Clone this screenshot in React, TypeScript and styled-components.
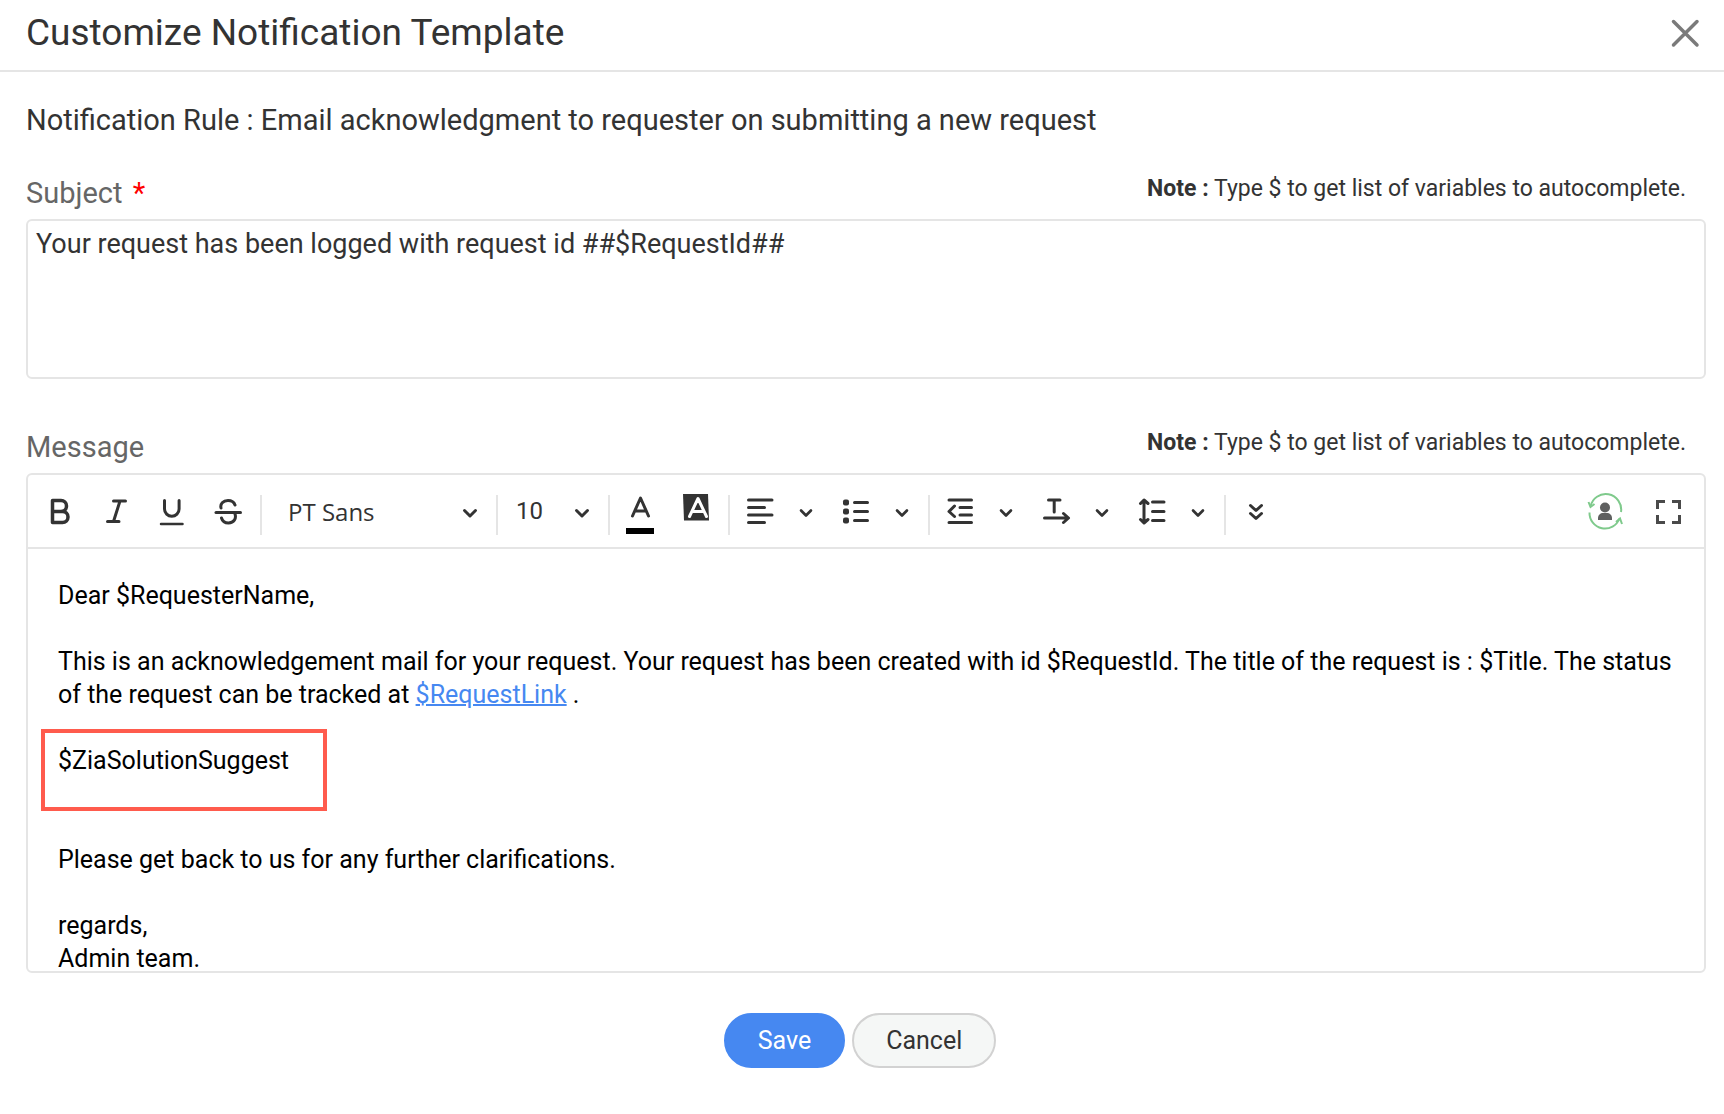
import React, { useState } from "react";
import styled, { createGlobalStyle, css } from "styled-components";

const uiFont = `Roboto, "Liberation Sans", sans-serif`;
const line = "#e5e5e5";
const ink = "#333333";

const GlobalStyle = createGlobalStyle`
  *, *::before, *::after { box-sizing: border-box; }
  body { margin: 0; background: #ffffff; color: ${ink}; font-family: ${uiFont}; }
  button, select, textarea { font: inherit; color: inherit; }
`;

const Dialog = styled.main`
  display: flex;
  flex-direction: column;
`;

const Header = styled.header`
  display: flex;
  align-items: center;
  justify-content: space-between;
  height: 72px;
  padding: 0 21px 4px 26px;
  border-bottom: 2px solid ${line};
`;

const Title = styled.h1`
  margin: 0;
  font-size: 37px;
  font-weight: 400;
  line-height: 44px;
`;

const IconButton = styled.button`
  display: flex;
  align-items: center;
  justify-content: center;
  width: 36px;
  height: 36px;
  padding: 0;
  border: 0;
  background: transparent;
  cursor: pointer;
`;

const Form = styled.form`
  display: flex;
  flex-direction: column;
  padding: 28px 18px 44px 26px;
`;

const Rule = styled.p`
  margin: 0 0 33px;
  font-size: 29px;
  line-height: 40px;
`;

const Field = styled.section`
  display: flex;
  flex-direction: column;
  margin-bottom: 48px;
`;

const FieldHead = styled.div`
  display: flex;
  align-items: flex-start;
  justify-content: space-between;
  padding-right: 20px;
  height: 46px;
`;

const labelText = css`
  font-size: 29px;
  line-height: 40px;
  color: #666666;
`;

const Label = styled.label`
  ${labelText}
`;

const LabelText = styled.span`
  ${labelText}
`;

const Required = styled.span`
  margin-left: 3px;
  color: #ff0000;
`;

const Note = styled.p`
  margin: 0;
  font-size: 23px;
  line-height: 32px;
`;

const SubjectBox = styled.textarea`
  width: 100%;
  height: 160px;
  padding: 6px 8px;
  border: 2px solid ${line};
  border-radius: 6px;
  font-size: 27px;
  line-height: 34px;
  resize: none;
  outline: none;
`;

const Editor = styled.div`
  display: flex;
  flex-direction: column;
  border: 2px solid ${line};
  border-radius: 6px;
  overflow: hidden;
`;

const Toolbar = styled.div`
  display: flex;
  align-items: center;
  justify-content: space-between;
  height: 74px;
  padding: 0 8px 0 4px;
  border-bottom: 2px solid ${line};
`;

const ToolGroup = styled.div<{ $gap?: number }>`
  display: flex;
  align-items: center;
  gap: ${(p) => p.$gap ?? 0}px;
`;

const Tool = styled.button`
  display: flex;
  align-items: center;
  justify-content: center;
  width: 56px;
  height: 48px;
  padding: 0;
  border: 0;
  background: transparent;
  cursor: pointer;
`;

const Caret = styled(Tool)`
  width: 36px;
  margin-right: 4px;
`;

const Divider = styled.span`
  width: 2px;
  height: 40px;
  margin: 8px 2px 0 4px;
  background: ${line};
`;

const SelectWrap = styled.span<{ $width: number }>`
  position: relative;
  width: ${(p) => p.$width}px;
  height: 48px;

  svg {
    position: absolute;
    top: 4px;
    right: 2px;
    pointer-events: none;
  }
`;

const Select = styled.select<{ $wide?: boolean }>`
  width: 100%;
  height: 48px;
  padding: 0 44px 0 ${(p) => (p.$wide ? 24 : 16)}px;
  border: 0;
  appearance: none;
  background: transparent;
  font-family: ${(p) => (p.$wide ? `"Open Sans", sans-serif` : uiFont)};
  font-size: 24px;
  cursor: pointer;
`;

const Body = styled.div`
  height: 422px;
  padding: 30px 30px 0 30px;
  overflow: hidden;
  color: #000000;
  font-size: 25px;
  line-height: 33px;
  outline: none;
`;

const Para = styled.p<{ $after?: number }>`
  position: relative;
  margin: 0 0 ${(p) => p.$after ?? 33}px;
`;

const MailLink = styled.a`
  color: #4688f1;
  text-decoration-thickness: 2px;
`;

const Highlight = styled.span`
  position: absolute;
  top: -15px;
  left: -17px;
  width: 286px;
  height: 82px;
  border: 4px solid #ff5b4d;
  pointer-events: none;
`;

const Actions = styled.div`
  display: flex;
  justify-content: center;
  gap: 7px;
  margin-top: -8px;
  padding-right: 12px;
`;

const Action = styled.button<{ $primary?: boolean }>`
  height: 55px;
  padding: 0 32px;
  border: 2px solid ${(p) => (p.$primary ? "#4688f1" : "#d2d2d2")};
  border-radius: 28px;
  background: ${(p) => (p.$primary ? "#4688f1" : "#f5f7f6")};
  color: ${(p) => (p.$primary ? "#ffffff" : ink)};
  font-size: 25px;
  cursor: pointer;
`;

const Glyph = ({ children, w = 3 }: { children: React.ReactNode; w?: number }) => (
  <svg width="40" height="48" viewBox="0 0 40 48" fill="none" stroke={ink} strokeWidth={w} strokeLinecap="round" strokeLinejoin="round" aria-hidden="true">
    {children}
  </svg>
);

const Chevron = () => (
  <svg width="40" height="40" viewBox="0 0 40 40" fill="none" stroke={ink} strokeWidth="3" strokeLinecap="round" strokeLinejoin="round" aria-hidden="true">
    <path d="M14.5 19.5 20 25l5.500-5.500" />
  </svg>
);

const BoldIcon = () => (
  <Glyph>
    <path d="M12.500 13.500h8.500a5.300 5.300 0 0 1 0 11h-8.500zM12.500 24.500h10a5.500 5.500 0 0 1 0 11h-10z" strokeWidth="3.500" />
  </Glyph>
);
const ItalicIcon = () => (
  <Glyph>
    <path d="M17.500 14h12M11.500 34.500h11.500M24 14l-6.500 20.500" />
  </Glyph>
);
const UnderlineIcon = () => (
  <Glyph>
    <path d="M12.500 13.500v8.500a7.300 7.300 0 0 0 14.600 0v-8.500" />
    <path d="M9 37h21.500" strokeWidth="2.500" />
  </Glyph>
);
const StrikeIcon = () => (
  <Glyph>
    <path d="M8 25.500h24.500" />
    <path d="M27 18c-1-3-3.500-4.500-7-4.500-5 0-8 3.500-7 7.500M13.500 31c1 3.500 3.500 5 7 5 5.500 0 8-4.500 6.500-9" />
  </Glyph>
);
const TextColorIcon = () => (
  <Glyph>
    <path d="m12.500 29 8-18 8 18M15 24h11" />
    <path d="M6 44h28" stroke="#000000" strokeWidth="6" strokeLinecap="butt" />
  </Glyph>
);
const FillColorIcon = () => (
  <Glyph>
    <path d="M7 7h25l1 26.500H8z" fill={ink} stroke="none" />
    <path d="m13.500 29.500 8.500-18 8.500 18M17 24.500h10.500" stroke="#ffffff" />
  </Glyph>
);
const AlignIcon = () => (
  <Glyph>
    <path d="M8.500 13h23.500M8.500 20.500h16M8.500 28h23.500M8.500 35.500h16" />
  </Glyph>
);
const ListIcon = () => (
  <Glyph>
    <path d="M18.500 15.500H31.500M18.500 24.500H31.500M18.500 33.500H31.500" />
    <g fill={ink} stroke="none">
      <rect x="7" y="12.500" width="6" height="6" rx="2" />
      <rect x="7" y="21.500" width="6" height="6" rx="2" />
      <rect x="7" y="30.500" width="6" height="6" rx="2" />
    </g>
  </Glyph>
);
const OutdentIcon = () => (
  <Glyph>
    <path d="M9 13h22.500M20 20.500h11.500M20 28h11.500M9 35.500h22.500M14.500 19l-5.500 5.500 5.500 5" />
  </Glyph>
);
const DirectionIcon = () => (
  <Glyph>
    <path d="M12.500 13H24M18.200 13v12M8.500 31H32M27.500 26.500 32.500 31 27.500 35.500" />
  </Glyph>
);
const LineHeightIcon = () => (
  <Glyph>
    <path d="M12 13.500V35.500M8.500 16.500 12 13l4 3.500M8.500 32.500 12 36l4-3.500M20.500 15H32M20.500 24.500H32M20.500 33.500H32" />
  </Glyph>
);
const MoreIcon = () => (
  <Glyph>
    <path d="M14.500 18.500 20 23.500l5.500-5M14.500 26.500 20 31.500l5.500-5" />
  </Glyph>
);
const PersonIcon = () => (
  <Glyph w={2}>
    <g stroke="#7fca8c" strokeLinejoin="miter" strokeLinecap="butt">
      <path d="M6.500 19.500a15.500 15.500 0 0 1 30.500 5.500" />
      <path d="M5.500 25.500a15.500 15.500 0 0 0 30 6" />
      <path d="M4.500 15l2 5 4-3M38 37l-2-5.500-4 3.500" />
    </g>
    <g fill="#5f6060" stroke="none">
      <circle cx="21" cy="20.500" r="5" />
      <path d="M14 33v-2c0-3 2.500-5 5-5h4c2.500 0 5 2 5 5v2z" />
    </g>
  </Glyph>
);
const FullscreenIcon = () => (
  <Glyph w={3}>
    <path d="M9.500 22v-7.500H17M24 14.500h7.500V22M31.500 28v7.500H24M17 35.500H9.500V28" stroke="#4a4a4a" strokeLinecap="butt" strokeLinejoin="miter" />
  </Glyph>
);

const styleTools = [
  { name: "Bold", Icon: BoldIcon },
  { name: "Italic", Icon: ItalicIcon },
  { name: "Underline", Icon: UnderlineIcon },
  { name: "Strikethrough", Icon: StrikeIcon },
];
const listTools = [
  { name: "Align", Icon: AlignIcon },
  { name: "List", Icon: ListIcon },
];
const layoutTools = [
  { name: "Indent", Icon: OutdentIcon },
  { name: "Text direction", Icon: DirectionIcon },
  { name: "Line height", Icon: LineHeightIcon },
];

const SplitTool = ({ name, Icon }: { name: string; Icon: React.ComponentType }) => (
  <>
    <Tool type="button" aria-label={name}><Icon /></Tool>
    <Caret type="button" aria-label={`${name} options`}><Chevron /></Caret>
  </>
);

const VariableNote = () => (
  <Note><strong>Note :</strong> Type $ to get list of variables to autocomplete.</Note>
);

export default function App() {
  const [subject, setSubject] = useState("Your request has been logged with request id ##$RequestId##");

  return (
    <>
      <GlobalStyle />
      <Dialog>
        <Header>
          <Title>Customize Notification Template</Title>
          <IconButton type="button" aria-label="Close">
            <svg width="36" height="36" viewBox="0 0 36 36" fill="none" stroke="#7a7a7a" strokeWidth="3.500" strokeLinecap="round" aria-hidden="true">
              <path d="M6.500 6.500 30 30M30 6.500 6.500 30" />
            </svg>
          </IconButton>
        </Header>
        <Form onSubmit={(e) => e.preventDefault()}>
          <Rule>Notification Rule : Email acknowledgment to requester on submitting a new request</Rule>
          <Field>
            <FieldHead>
              <Label htmlFor="subject">Subject <Required>*</Required></Label>
              <VariableNote />
            </FieldHead>
            <SubjectBox id="subject" required spellCheck={false} value={subject} onChange={(e) => setSubject(e.target.value)} />
          </Field>
          <Field>
            <FieldHead>
              <LabelText id="message-label">Message</LabelText>
              <VariableNote />
            </FieldHead>
            <Editor>
              <Toolbar role="toolbar" aria-label="Formatting">
                <ToolGroup>
                  {styleTools.map(({ name, Icon }) => (
                    <Tool key={name} type="button" aria-label={name}><Icon /></Tool>
                  ))}
                  <Divider />
                  <SelectWrap $width={228}>
                    <Select $wide aria-label="Font family" defaultValue="PT Sans">
                      <option>PT Sans</option>
                    </Select>
                    <Chevron />
                  </SelectWrap>
                  <Divider />
                  <SelectWrap $width={104}>
                    <Select aria-label="Font size" defaultValue="10">
                      <option>10</option>
                    </Select>
                    <Chevron />
                  </SelectWrap>
                  <Divider />
                  <Tool type="button" aria-label="Text color"><TextColorIcon /></Tool>
                  <Tool type="button" aria-label="Background color"><FillColorIcon /></Tool>
                  <Divider />
                  {listTools.map((tool) => <SplitTool key={tool.name} {...tool} />)}
                  <Divider />
                  {layoutTools.map((tool) => <SplitTool key={tool.name} {...tool} />)}
                  <Divider />
                  <Tool type="button" aria-label="More tools"><MoreIcon /></Tool>
                </ToolGroup>
                <ToolGroup $gap={8}>
                  <Tool type="button" aria-label="Insert user variable"><PersonIcon /></Tool>
                  <Tool type="button" aria-label="Full screen"><FullscreenIcon /></Tool>
                </ToolGroup>
              </Toolbar>
              <Body role="textbox" aria-multiline="true" aria-labelledby="message-label" contentEditable suppressContentEditableWarning spellCheck={false}>
                <Para>Dear $RequesterName,</Para>
                <Para>
                  This is an acknowledgement mail for your request. Your request has been created with id $RequestId. The title of the request is : $Title. The status of the request can be tracked at <MailLink href="#request">$RequestLink</MailLink> .
                </Para>
                <Para $after={66}>
                  $ZiaSolutionSuggest
                  <Highlight />
                </Para>
                <Para>Please get back to us for any further clarifications.</Para>
                <Para $after={0}>regards,<br />Admin team.</Para>
              </Body>
            </Editor>
          </Field>
          <Actions>
            <Action type="submit" $primary>Save</Action>
            <Action type="button">Cancel</Action>
          </Actions>
        </Form>
      </Dialog>
    </>
  );
}
